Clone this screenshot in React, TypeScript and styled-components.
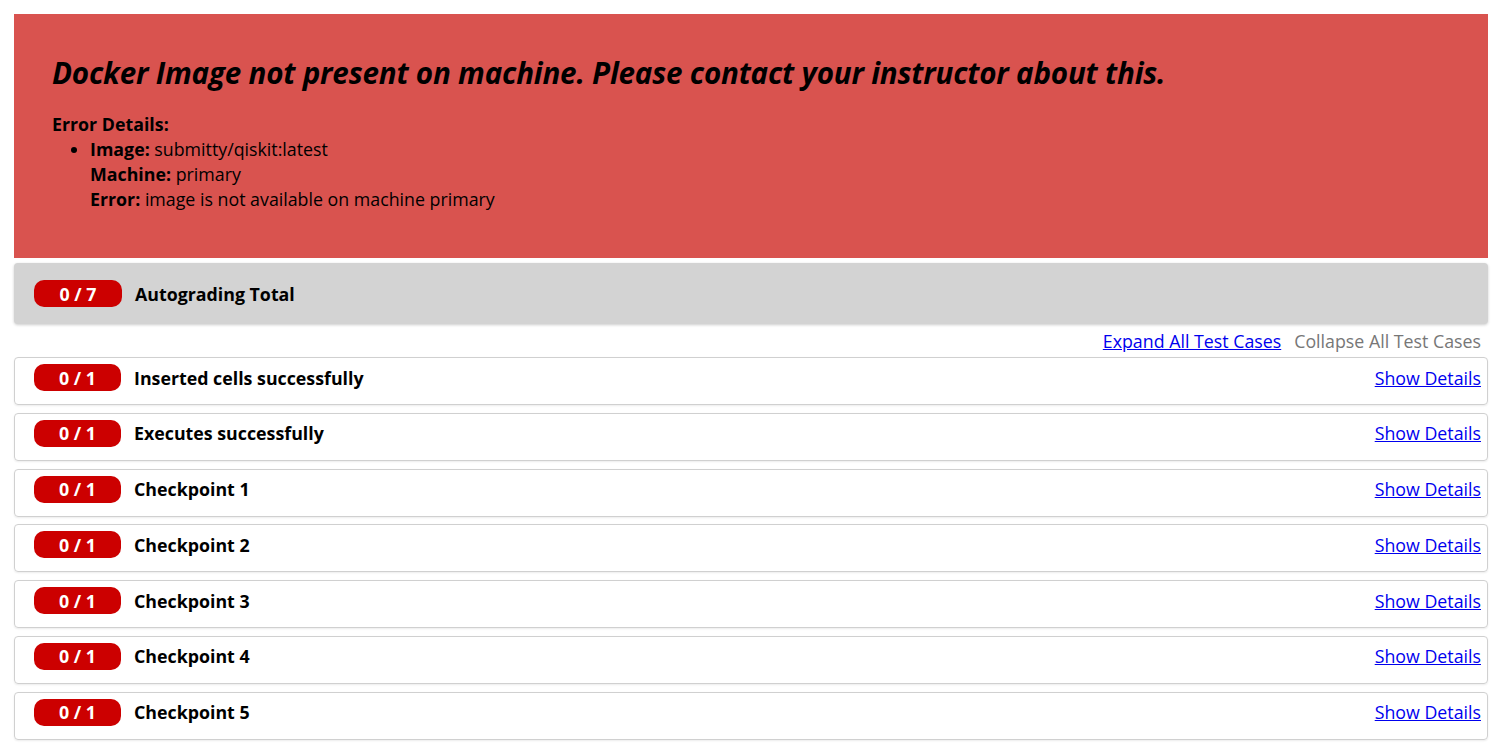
import React from 'react';
import styled, { createGlobalStyle } from 'styled-components';

const GlobalStyle = createGlobalStyle`
  body {
    margin: 0;
    font-family: 'Open Sans', 'Lato', sans-serif;
    font-size: 17.8px;
    color: #000000;
    background-color: #ffffff;
  }
`;

const Page = styled.div`
  padding: 14px 8px 14px 14px;
`;

const ErrorBanner = styled.section`
  height: 244px;
  box-sizing: border-box;
  padding: 42px 38px 0;
  background-color: #d9534f;

  h2 {
    margin: 0 0 22px;
    font-size: 29.6px;
    font-style: italic;
    font-weight: 700;
    line-height: 34px;
    letter-spacing: -0.2px;
  }
  strong {
    font-weight: 700;
  }
`;

const DetailsTitle = styled.div`
  font-weight: 700;
  line-height: 25px;
`;

const DetailList = styled.ul`
  margin: 0;
  padding-left: 38px;
  line-height: 25px;
`;

const TotalBar = styled.div`
  display: flex;
  align-items: center;
  gap: 13px;
  height: 61px;
  margin-top: 5px;
  padding: 0 20px;
  background-color: #d3d3d3;
  border-radius: 4px;
  box-shadow: 0 1px 3px rgba(0, 0, 0, 0.2);
  font-weight: 700;
`;

const Badge = styled.span<{ wide?: boolean }>`
  display: inline-flex;
  justify-content: center;
  align-items: center;
  flex-shrink: 0;
  width: ${(p) => (p.wide ? '88px' : '87px')};
  height: 27px;
  color: #ffffff;
  background-color: #cc0000;
  border-radius: 10px;
  font-weight: 700;
  font-size: 17.8px;
`;

const Toggles = styled.div`
  display: flex;
  justify-content: flex-end;
  gap: 13px;
  padding: 5px 7px 4px 0;
  line-height: 24px;

  a {
    color: #0000ee;
    text-decoration: underline;
    cursor: pointer;
  }
  span {
    color: #777777;
  }
`;

const CaseBox = styled.div`
  display: flex;
  align-items: center;
  gap: 13px;
  height: 39px;
  margin-bottom: 7.8px;
  padding: 0 6px 7px 19px;
  border: 1px solid #d0d0d0;
  border-radius: 4px;
  box-shadow: 0 1px 2px rgba(0, 0, 0, 0.08);

  b {
    flex: 1;
    font-weight: 700;
  }
  a {
    color: #0000ee;
    text-decoration: underline;
    cursor: pointer;
  }
`;

const cases = [
  'Inserted cells successfully',
  'Executes successfully',
  'Checkpoint 1',
  'Checkpoint 2',
  'Checkpoint 3',
  'Checkpoint 4',
  'Checkpoint 5',
];

export default function App() {
  return (
    <>
      <GlobalStyle />
      <Page>
        <ErrorBanner>
          <h2>Docker Image not present on machine. Please contact your instructor about this.</h2>
          <DetailsTitle>Error Details:</DetailsTitle>
          <DetailList>
            <li>
              <strong>Image:</strong> submitty/qiskit:latest
              <br />
              <strong>Machine:</strong> primary
              <br />
              <strong>Error:</strong> image is not available on machine primary
            </li>
          </DetailList>
        </ErrorBanner>
        <TotalBar>
          <Badge wide>0 / 7</Badge>
          Autograding Total
        </TotalBar>
        <Toggles>
          <a>Expand All Test Cases</a>
          <span>Collapse All Test Cases</span>
        </Toggles>
        {cases.map((name) => (
          <CaseBox key={name}>
            <Badge>0 / 1</Badge>
            <b>{name}</b>
            <a>Show Details</a>
          </CaseBox>
        ))}
      </Page>
    </>
  );
}
